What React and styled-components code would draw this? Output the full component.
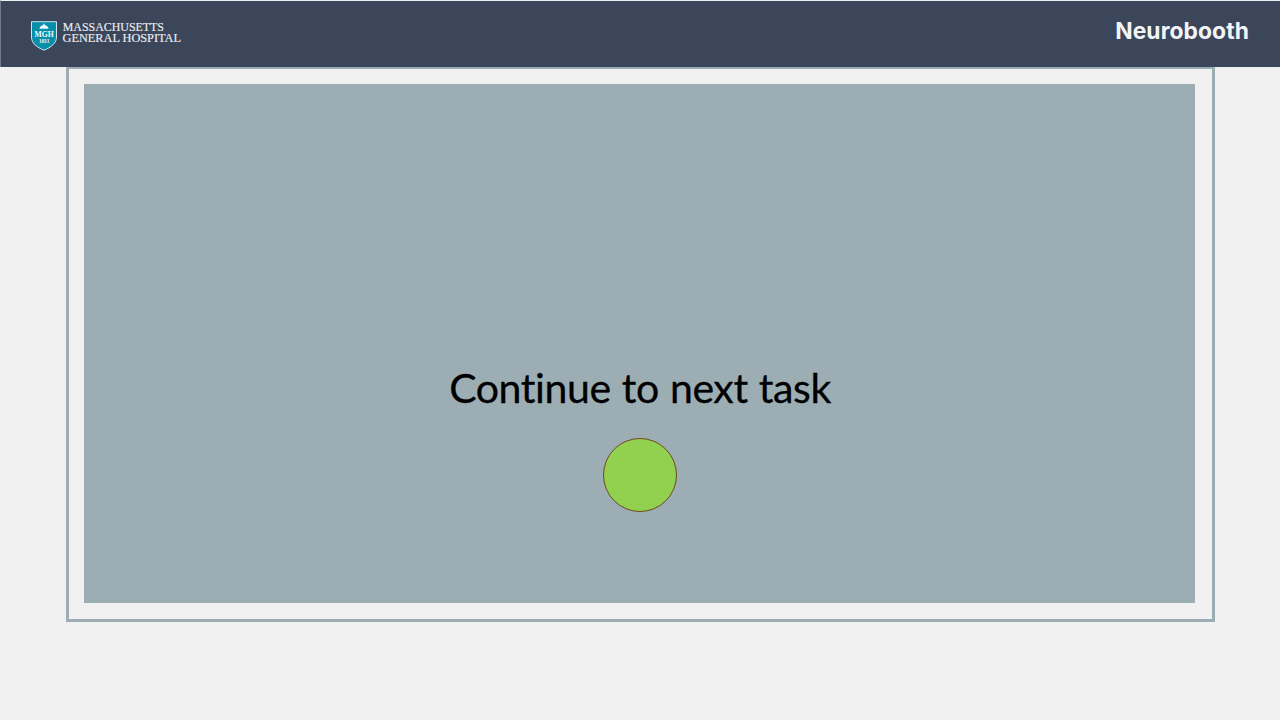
import React from "react";
import styled, { createGlobalStyle } from "styled-components";

const GlobalStyle = createGlobalStyle`
  * { box-sizing: border-box; }
  body { margin: 0; background: #f1f1f1; }
`;

const Page = styled.div`
  display: flex;
  flex-direction: column;
  width: 1280px;
  height: 720px;
  overflow: hidden;
  background: #f1f1f1;
`;

const Header = styled.header`
  display: flex;
  flex: none;
  justify-content: space-between;
  align-items: flex-start;
  height: 67px;
  padding: 19px 31px 0 29px;
  background: #3b465a;
  border-top: 1px solid #eef1f1;
  border-left: 1px solid #717b89;
`;

const Logo = styled.svg`
  display: block;
  width: 156px;
  height: 32px;
`;

const Brand = styled.div`
  font: 700 22.8px/24px Inter, sans-serif;
  letter-spacing: 0.1px;
  margin-top: -1px;
  color: #f3f4f5;
`;

const Frame = styled.main`
  flex: none;
  width: 1149px;
  height: 555px;
  margin-left: 66px;
  padding: 15px 17px 16px 15px;
  border: 3px solid #9caeb4;
  border-top-width: 2px;
`;

const Panel = styled.section`
  display: flex;
  flex-direction: column;
  align-items: center;
  width: 1111px;
  height: 519px;
  padding: 279px 0 0 1px;
  background: #9caeb4;
`;

const Message = styled.h1`
  margin: 0;
  font: 400 41px/50px Lato, sans-serif;
  letter-spacing: -0.4px;
  word-spacing: 1px;
  -webkit-text-stroke: 0.3px #000;
  white-space: nowrap;
  color: #000;
`;

const ContinueButton = styled.button`
  width: 74px;
  height: 74px;
  margin-top: 25px;
  padding: 0;
  border: 1px solid #6f4a1c;
  border-radius: 50%;
  background: #92d050;
`;

function HospitalLogo() {
  return (
    <Logo viewBox="30 20 156 32">
      <path
        d="M31.5 21.7H56.5V37C56.5 43.2 51.4 47.2 44 50.2C36.6 47.2 31.5 43.2 31.5 37Z"
        fill="#078eab"
        stroke="#c9e7ed"
        strokeWidth="1"
      />
      <path d="M39.4 28.8C39.8 26.6 41.3 25.5 43.3 25.1V23.8H44.7V25.1C46.7 25.5 48.2 26.6 48.6 28.8Z" fill="#e9f6f8" />
      <g fontFamily="'Liberation Serif', serif" fontWeight="700" fill="#f2fafb">
        <text x="34.4" y="37" fontSize="8.8" textLength="19.3" lengthAdjust="spacingAndGlyphs">MGH</text>
        <text x="39" y="43" fontSize="5.5" textLength="10.4" lengthAdjust="spacingAndGlyphs">1811</text>
      </g>
      <g fontFamily="'Liberation Serif', serif" fontSize="12.2" fill="#eceef2" stroke="#eceef2" strokeWidth="0.15">
        <text x="62.7" y="30.7" textLength="101.3" lengthAdjust="spacingAndGlyphs">MASSACHUSETTS</text>
        <text x="62.5" y="42.2" textLength="118.5" lengthAdjust="spacingAndGlyphs">GENERAL HOSPITAL</text>
      </g>
    </Logo>
  );
}

export default function App() {
  return (
    <Page>
      <GlobalStyle />
      <Header>
        <HospitalLogo />
        <Brand>Neurobooth</Brand>
      </Header>
      <Frame>
        <Panel>
          <Message>Continue to next task</Message>
          <ContinueButton aria-label="Continue" />
        </Panel>
      </Frame>
    </Page>
  );
}
